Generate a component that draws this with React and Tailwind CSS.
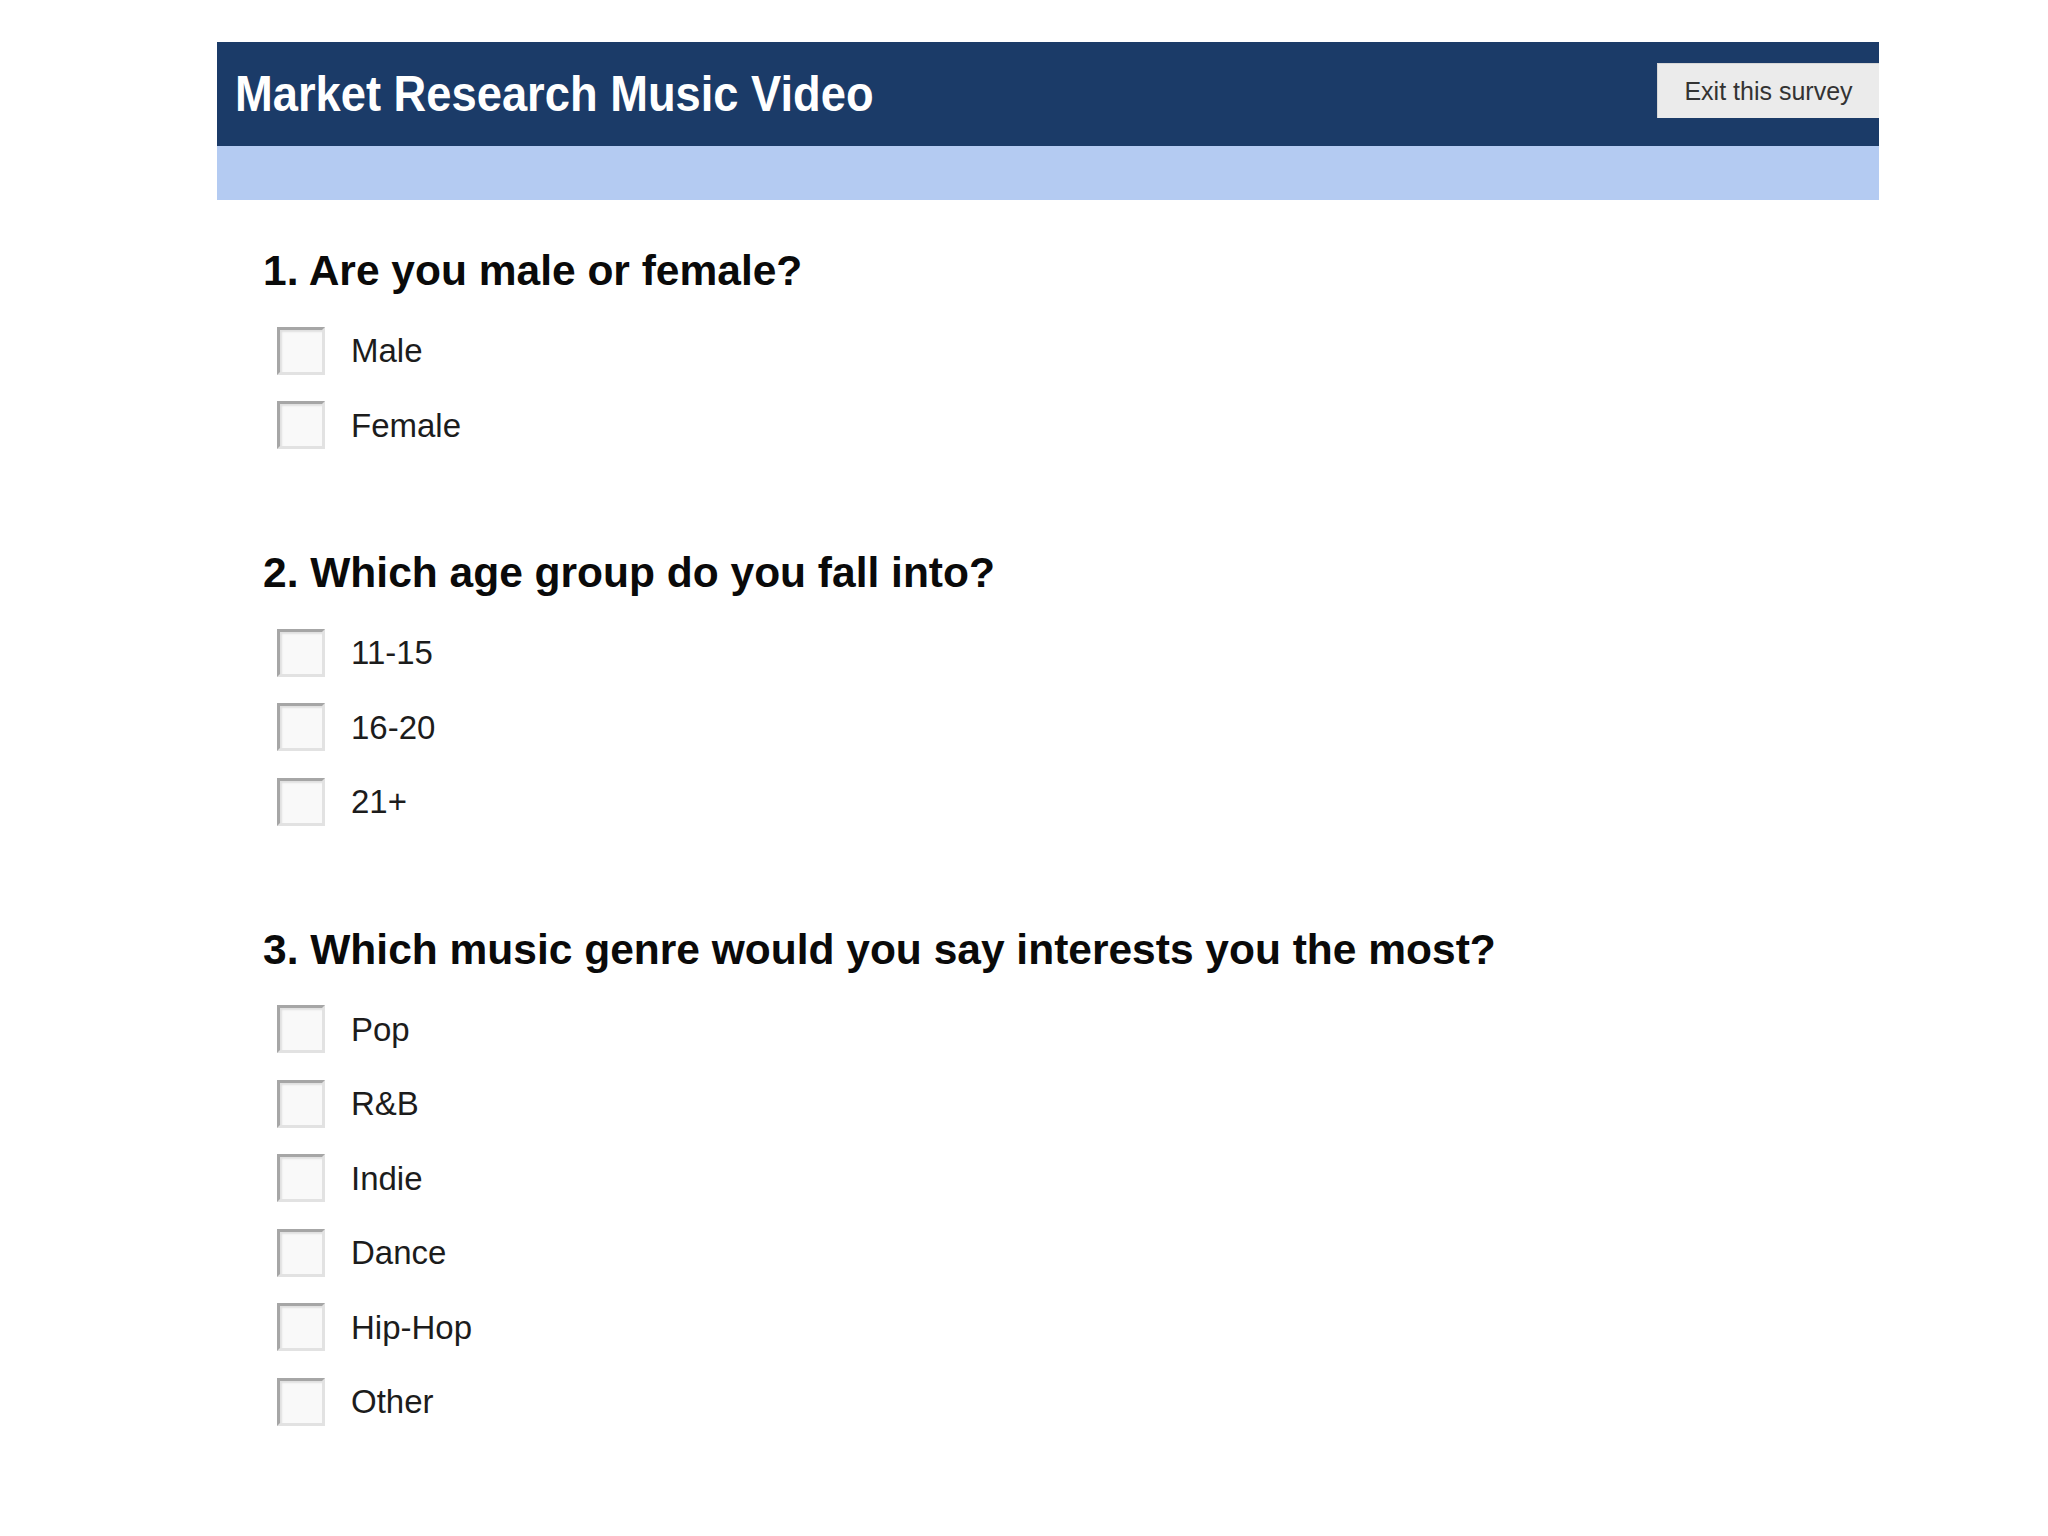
import React from 'react';

const questions = [
  { title: '1. Are you male or female?', options: ['Male', 'Female'] },
  { title: '2. Which age group do you fall into?', options: ['11-15', '16-20', '21+'] },
  {
    title: '3. Which music genre would you say interests you the most?',
    options: ['Pop', 'R&B', 'Indie', 'Dance', 'Hip-Hop', 'Other'],
  },
];

function Box() {
  return (
    <span className="block w-[48px] h-[48px] bg-[#f9f9f9] border-[3px] border-t-[#a6a6a6] border-l-[#a6a6a6] border-b-[#e2e2e2] border-r-[#e2e2e2] shadow-[inset_2px_2px_2px_rgba(0,0,0,0.1)]"></span>
  );
}

function Question({ q }) {
  return (
    <div>
      <h2 className="text-[42.5px] leading-none font-bold text-[#0a0a0a]">{q.title}</h2>
      <div className="mt-[34px] ml-[14px] flex flex-col gap-[26.5px]">
        {q.options.map((o) => (
          <label key={o} className="flex items-center gap-[26px] h-[48px]">
            <Box />
            <span className="text-[33px] leading-none text-[#1c1c1c]">{o}</span>
          </label>
        ))}
      </div>
    </div>
  );
}

export default function App() {
  return (
    <div className="min-h-screen bg-white font-['Liberation_Sans',Arial,sans-serif]">
      <div className="ml-[217px] pt-[42px] w-[1662px]">
        <div className="bg-[#1b3b68] h-[104px] flex justify-between">
          <h1 className="pl-[18px] self-center text-[45.3px] leading-none font-bold text-white scale-y-[1.1]">
            Market Research Music Video
          </h1>
          <button className="mt-[21px] h-[55px] w-[222px] bg-[#ebebeb] border-t border-l border-[#d6d6d6] text-[25px] text-[#333] leading-none">
            Exit this survey
          </button>
        </div>
        <div className="h-[54px] bg-[#b4cbf2]"></div>
        <div className="pl-[46px] pt-[50px] flex flex-col gap-[103px] pb-[100px]">
          {questions.map((q) => (
            <Question key={q.title} q={q} />
          ))}
        </div>
      </div>
    </div>
  );
}
